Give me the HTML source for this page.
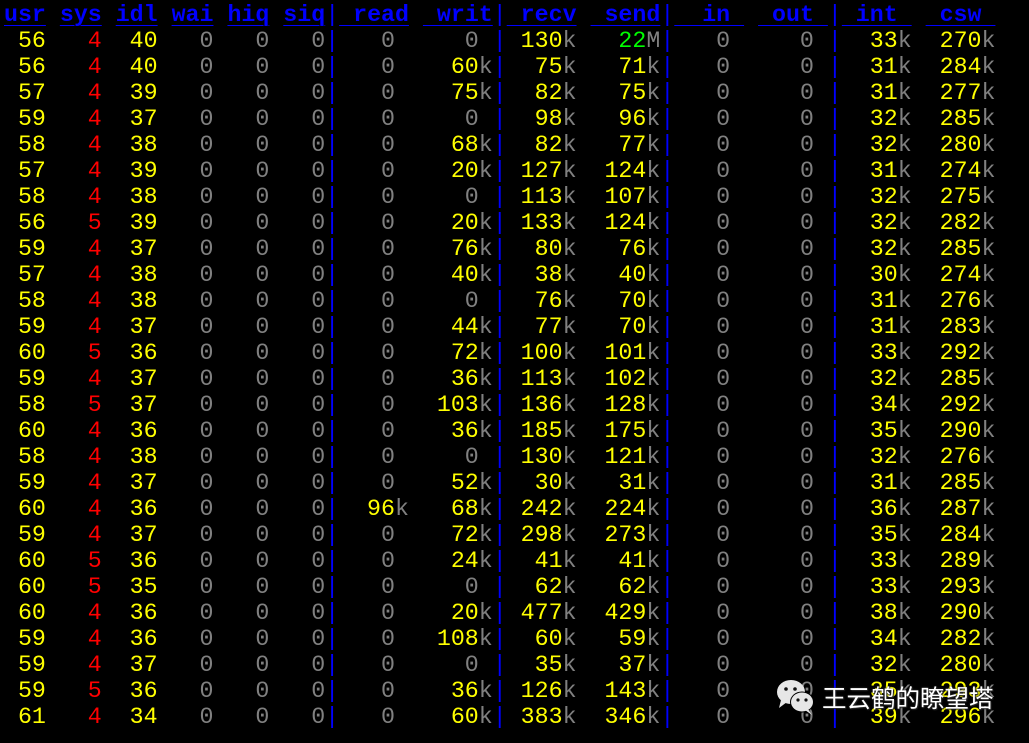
<!DOCTYPE html>
<html><head><meta charset="utf-8">
<style>
html,body{margin:0;padding:0;background:#000;width:1029px;height:743px;overflow:hidden}
pre{position:absolute;left:4px;top:2px;margin:0;font-family:"Liberation Mono","Courier New",monospace;font-size:23.27px;line-height:26px;color:#808080}
.h{color:#0000ff;font-weight:bold}
.u{text-decoration:underline;text-underline-offset:4px;text-decoration-thickness:1px}
.y{color:#ffff00}.r{color:#ff0000}.g{color:#808080}.b{color:#0000ff}.n{color:#00ff00}
#wm{position:absolute;left:775px;top:678px;width:240px;height:40px}
#wm span{position:absolute;left:47px;top:2px;font-family:"Liberation Sans","Noto Sans CJK SC",sans-serif;font-size:24.5px;color:#fff;text-shadow:0 0 2px #333,1px 1px 1px #222;white-space:nowrap}
</style></head><body>
<pre><span class="h"><span class="u">usr</span> <span class="u">sys</span> <span class="u">idl</span> <span class="u">wai</span> <span class="u">hiq</span> <span class="u">siq</span></span><span class="b">|</span><span class="h"><span class="u"> read</span> <span class="u"> writ</span></span><span class="b">|</span><span class="h"><span class="u"> recv</span> <span class="u"> send</span></span><span class="b">|</span><span class="h"><span class="u">  in </span> <span class="u"> out </span></span><span class="b">|</span><span class="h"><span class="u"> int </span> <span class="u"> csw </span></span>
<span class="y"> 56</span> <span class="r">  4</span> <span class="y"> 40</span>   0   0   0<span class="b">|</span>   0     0 <span class="b">|</span><span class="y"> 130</span>k <span class="n">  22</span>M<span class="b">|</span>   0     0 <span class="b">|</span><span class="y">  33</span>k <span class="y"> 270</span>k
<span class="y"> 56</span> <span class="r">  4</span> <span class="y"> 40</span>   0   0   0<span class="b">|</span>   0  <span class="y">  60</span>k<span class="b">|</span><span class="y">  75</span>k <span class="y">  71</span>k<span class="b">|</span>   0     0 <span class="b">|</span><span class="y">  31</span>k <span class="y"> 284</span>k
<span class="y"> 57</span> <span class="r">  4</span> <span class="y"> 39</span>   0   0   0<span class="b">|</span>   0  <span class="y">  75</span>k<span class="b">|</span><span class="y">  82</span>k <span class="y">  75</span>k<span class="b">|</span>   0     0 <span class="b">|</span><span class="y">  31</span>k <span class="y"> 277</span>k
<span class="y"> 59</span> <span class="r">  4</span> <span class="y"> 37</span>   0   0   0<span class="b">|</span>   0     0 <span class="b">|</span><span class="y">  98</span>k <span class="y">  96</span>k<span class="b">|</span>   0     0 <span class="b">|</span><span class="y">  32</span>k <span class="y"> 285</span>k
<span class="y"> 58</span> <span class="r">  4</span> <span class="y"> 38</span>   0   0   0<span class="b">|</span>   0  <span class="y">  68</span>k<span class="b">|</span><span class="y">  82</span>k <span class="y">  77</span>k<span class="b">|</span>   0     0 <span class="b">|</span><span class="y">  32</span>k <span class="y"> 280</span>k
<span class="y"> 57</span> <span class="r">  4</span> <span class="y"> 39</span>   0   0   0<span class="b">|</span>   0  <span class="y">  20</span>k<span class="b">|</span><span class="y"> 127</span>k <span class="y"> 124</span>k<span class="b">|</span>   0     0 <span class="b">|</span><span class="y">  31</span>k <span class="y"> 274</span>k
<span class="y"> 58</span> <span class="r">  4</span> <span class="y"> 38</span>   0   0   0<span class="b">|</span>   0     0 <span class="b">|</span><span class="y"> 113</span>k <span class="y"> 107</span>k<span class="b">|</span>   0     0 <span class="b">|</span><span class="y">  32</span>k <span class="y"> 275</span>k
<span class="y"> 56</span> <span class="r">  5</span> <span class="y"> 39</span>   0   0   0<span class="b">|</span>   0  <span class="y">  20</span>k<span class="b">|</span><span class="y"> 133</span>k <span class="y"> 124</span>k<span class="b">|</span>   0     0 <span class="b">|</span><span class="y">  32</span>k <span class="y"> 282</span>k
<span class="y"> 59</span> <span class="r">  4</span> <span class="y"> 37</span>   0   0   0<span class="b">|</span>   0  <span class="y">  76</span>k<span class="b">|</span><span class="y">  80</span>k <span class="y">  76</span>k<span class="b">|</span>   0     0 <span class="b">|</span><span class="y">  32</span>k <span class="y"> 285</span>k
<span class="y"> 57</span> <span class="r">  4</span> <span class="y"> 38</span>   0   0   0<span class="b">|</span>   0  <span class="y">  40</span>k<span class="b">|</span><span class="y">  38</span>k <span class="y">  40</span>k<span class="b">|</span>   0     0 <span class="b">|</span><span class="y">  30</span>k <span class="y"> 274</span>k
<span class="y"> 58</span> <span class="r">  4</span> <span class="y"> 38</span>   0   0   0<span class="b">|</span>   0     0 <span class="b">|</span><span class="y">  76</span>k <span class="y">  70</span>k<span class="b">|</span>   0     0 <span class="b">|</span><span class="y">  31</span>k <span class="y"> 276</span>k
<span class="y"> 59</span> <span class="r">  4</span> <span class="y"> 37</span>   0   0   0<span class="b">|</span>   0  <span class="y">  44</span>k<span class="b">|</span><span class="y">  77</span>k <span class="y">  70</span>k<span class="b">|</span>   0     0 <span class="b">|</span><span class="y">  31</span>k <span class="y"> 283</span>k
<span class="y"> 60</span> <span class="r">  5</span> <span class="y"> 36</span>   0   0   0<span class="b">|</span>   0  <span class="y">  72</span>k<span class="b">|</span><span class="y"> 100</span>k <span class="y"> 101</span>k<span class="b">|</span>   0     0 <span class="b">|</span><span class="y">  33</span>k <span class="y"> 292</span>k
<span class="y"> 59</span> <span class="r">  4</span> <span class="y"> 37</span>   0   0   0<span class="b">|</span>   0  <span class="y">  36</span>k<span class="b">|</span><span class="y"> 113</span>k <span class="y"> 102</span>k<span class="b">|</span>   0     0 <span class="b">|</span><span class="y">  32</span>k <span class="y"> 285</span>k
<span class="y"> 58</span> <span class="r">  5</span> <span class="y"> 37</span>   0   0   0<span class="b">|</span>   0  <span class="y"> 103</span>k<span class="b">|</span><span class="y"> 136</span>k <span class="y"> 128</span>k<span class="b">|</span>   0     0 <span class="b">|</span><span class="y">  34</span>k <span class="y"> 292</span>k
<span class="y"> 60</span> <span class="r">  4</span> <span class="y"> 36</span>   0   0   0<span class="b">|</span>   0  <span class="y">  36</span>k<span class="b">|</span><span class="y"> 185</span>k <span class="y"> 175</span>k<span class="b">|</span>   0     0 <span class="b">|</span><span class="y">  35</span>k <span class="y"> 290</span>k
<span class="y"> 58</span> <span class="r">  4</span> <span class="y"> 38</span>   0   0   0<span class="b">|</span>   0     0 <span class="b">|</span><span class="y"> 130</span>k <span class="y"> 121</span>k<span class="b">|</span>   0     0 <span class="b">|</span><span class="y">  32</span>k <span class="y"> 276</span>k
<span class="y"> 59</span> <span class="r">  4</span> <span class="y"> 37</span>   0   0   0<span class="b">|</span>   0  <span class="y">  52</span>k<span class="b">|</span><span class="y">  30</span>k <span class="y">  31</span>k<span class="b">|</span>   0     0 <span class="b">|</span><span class="y">  31</span>k <span class="y"> 285</span>k
<span class="y"> 60</span> <span class="r">  4</span> <span class="y"> 36</span>   0   0   0<span class="b">|</span><span class="y">  96</span>k <span class="y">  68</span>k<span class="b">|</span><span class="y"> 242</span>k <span class="y"> 224</span>k<span class="b">|</span>   0     0 <span class="b">|</span><span class="y">  36</span>k <span class="y"> 287</span>k
<span class="y"> 59</span> <span class="r">  4</span> <span class="y"> 37</span>   0   0   0<span class="b">|</span>   0  <span class="y">  72</span>k<span class="b">|</span><span class="y"> 298</span>k <span class="y"> 273</span>k<span class="b">|</span>   0     0 <span class="b">|</span><span class="y">  35</span>k <span class="y"> 284</span>k
<span class="y"> 60</span> <span class="r">  5</span> <span class="y"> 36</span>   0   0   0<span class="b">|</span>   0  <span class="y">  24</span>k<span class="b">|</span><span class="y">  41</span>k <span class="y">  41</span>k<span class="b">|</span>   0     0 <span class="b">|</span><span class="y">  33</span>k <span class="y"> 289</span>k
<span class="y"> 60</span> <span class="r">  5</span> <span class="y"> 35</span>   0   0   0<span class="b">|</span>   0     0 <span class="b">|</span><span class="y">  62</span>k <span class="y">  62</span>k<span class="b">|</span>   0     0 <span class="b">|</span><span class="y">  33</span>k <span class="y"> 293</span>k
<span class="y"> 60</span> <span class="r">  4</span> <span class="y"> 36</span>   0   0   0<span class="b">|</span>   0  <span class="y">  20</span>k<span class="b">|</span><span class="y"> 477</span>k <span class="y"> 429</span>k<span class="b">|</span>   0     0 <span class="b">|</span><span class="y">  38</span>k <span class="y"> 290</span>k
<span class="y"> 59</span> <span class="r">  4</span> <span class="y"> 36</span>   0   0   0<span class="b">|</span>   0  <span class="y"> 108</span>k<span class="b">|</span><span class="y">  60</span>k <span class="y">  59</span>k<span class="b">|</span>   0     0 <span class="b">|</span><span class="y">  34</span>k <span class="y"> 282</span>k
<span class="y"> 59</span> <span class="r">  4</span> <span class="y"> 37</span>   0   0   0<span class="b">|</span>   0     0 <span class="b">|</span><span class="y">  35</span>k <span class="y">  37</span>k<span class="b">|</span>   0     0 <span class="b">|</span><span class="y">  32</span>k <span class="y"> 280</span>k
<span class="y"> 59</span> <span class="r">  5</span> <span class="y"> 36</span>   0   0   0<span class="b">|</span>   0  <span class="y">  36</span>k<span class="b">|</span><span class="y"> 126</span>k <span class="y"> 143</span>k<span class="b">|</span>   0     0 <span class="b">|</span><span class="y">  35</span>k <span class="y"> 293</span>k
<span class="y"> 61</span> <span class="r">  4</span> <span class="y"> 34</span>   0   0   0<span class="b">|</span>   0  <span class="y">  60</span>k<span class="b">|</span><span class="y"> 383</span>k <span class="y"> 346</span>k<span class="b">|</span>   0     0 <span class="b">|</span><span class="y">  39</span>k <span class="y"> 296</span>k</pre>
<div id="wm">
<svg width="44" height="40" viewBox="0 0 44 40" style="position:absolute;left:0;top:0">
<ellipse cx="16" cy="14" rx="14" ry="12" fill="#e6e6e6"/>
<path d="M6 22 L4 30 L12 24 Z" fill="#e6e6e6"/>
<circle cx="11" cy="11" r="1.8" fill="#111"/><circle cx="20" cy="11" r="1.8" fill="#111"/>
<ellipse cx="27" cy="24" rx="12" ry="10.5" fill="#000"/>
<ellipse cx="27" cy="24" rx="11" ry="9.5" fill="#e6e6e6"/>
<path d="M33 31 L37 37 L30 32 Z" fill="#e6e6e6"/>
<circle cx="23" cy="22" r="1.6" fill="#111"/><circle cx="31" cy="22" r="1.6" fill="#111"/>
</svg>
<span>王云鹤的瞭望塔</span>
</div>
</body></html>
